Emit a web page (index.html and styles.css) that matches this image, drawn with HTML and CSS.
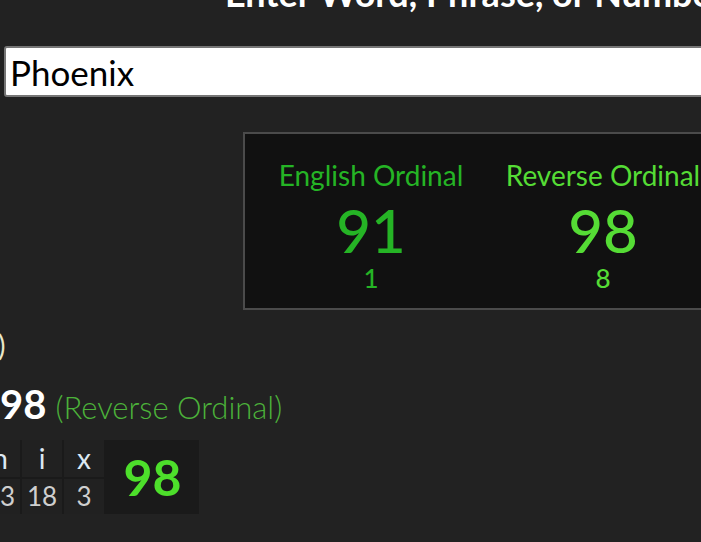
FILE: index.html
```html
<!DOCTYPE html>
<html lang="en">
<head>
  <meta charset="UTF-8">
  <title>Gematria Calculator</title>
  <link rel="stylesheet" href="styles.css">
</head>
<body>

<div class="page">
  <h1 class="title">Enter Word, Phrase, or Number</h1>
  <input class="entry" type="text" value="Phoenix">

  <div class="results">
    <div class="cipher english">
      <div class="name">English Ordinal</div>
      <div class="total">91</div>
      <div class="root">1</div>
    </div>
    <div class="cipher reverse">
      <div class="name">Reverse Ordinal</div>
      <div class="total">98</div>
      <div class="root">8</div>
    </div>
  </div>

  <div class="prev-line">)</div>
  <div class="sum-line"><b>98</b><span>(Reverse Ordinal)</span></div>

  <div class="breakdown">
    <div class="ch">P</div><div class="ch">h</div><div class="ch">o</div><div class="ch">e</div><div class="ch">n</div><div class="ch">i</div><div class="ch">x</div>
    <div class="big">98</div>
    <div class="val">11</div><div class="val">19</div><div class="val">12</div><div class="val">22</div><div class="val">13</div><div class="val">18</div><div class="val">3</div>
  </div>
</div>

</body>
</html>
```

FILE: styles.css
```css
body {
  margin: 0;
  background: #222;
  color: #fff;
  font-family: Lato, "Noto Sans", sans-serif;
  overflow: hidden;
}
.page {
  width: 1200px;
}
.title {
  margin: -29px 0 0 225px;
  font-size: 36px;
  line-height: 44px;
  font-weight: 700;
  white-space: nowrap;
}
.entry {
  display: block;
  box-sizing: border-box;
  margin: 31px 0 0 4px;
  width: 1000px;
  height: 51px;
  padding: 0 4px;
  border: 2px solid #767676;
  border-radius: 3px;
  background: #fff;
  color: #000;
  font-family: Lato, sans-serif;
  font-size: 35px;
}
.results {
  display: flex;
  margin: 35px 0 0 243px;
  width: 700px;
  height: 150px;
  padding: 24px 0 0 10px;
  border: 2px solid #4b4b4b;
  background: #111;
}
.cipher {
  width: 232px;
  text-align: center;
}
.name {
  font-size: 28px;
  line-height: 34px;
}
.total {
  margin-top: 6px;
  font-size: 60px;
  font-weight: 500;
  line-height: 64px;
}
.root {
  margin-top: 3px;
  font-size: 26px;
  font-weight: 500;
  line-height: 26px;
}
.english {
  color: #25b425;
}
.reverse {
  color: #55dc35;
}
.prev-line {
  margin: 18px 0 0 -2px;
  font-size: 28px;
  line-height: 34px;
  color: #ebe8c8;
}
.sum-line {
  display: flex;
  align-items: baseline;
  gap: 9px;
  height: 48px;
  margin-top: 18px;
  line-height: 48px;
}
.sum-line b {
  font-size: 40px;
  font-weight: 700;
}
.sum-line span {
  font-size: 31px;
  font-weight: 300;
  color: #4cb23a;
}
.breakdown {
  display: grid;
  grid-template-columns: repeat(7, 40px) 93px;
  grid-template-rows: 37px 35px;
  gap: 2px;
  margin: 12px 0 0 -188px;
  width: max-content;
  background: #1a1a1a;
}
.ch, .val {
  background: #212121;
  text-align: center;
}
.ch {
  font-size: 28px;
  line-height: 37px;
  color: #dce8f2;
}
.val {
  font-size: 26px;
  line-height: 35px;
  color: #cfcfcf;
}
.big {
  grid-column: 8;
  grid-row: 1 / 3;
  display: flex;
  align-items: center;
  justify-content: center;
  font-size: 50px;
  font-weight: 700;
  color: #4ddf2b;
}
```
